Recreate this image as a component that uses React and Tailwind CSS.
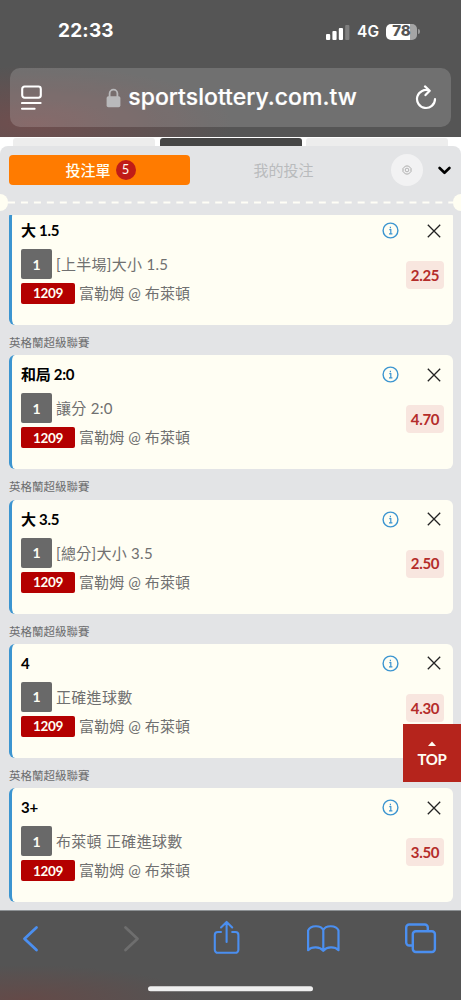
const bets = [
	{ id: 1, title: "大 1.5", market: "[上半場]大小 1.5", odds: "2.25" },
	{ id: 2, title: "和局 2:0", market: "讓分 2:0", odds: "4.70" },
	{ id: 3, title: "大 3.5", market: "[總分]大小 3.5", odds: "2.50" },
	{ id: 4, title: "4", market: "正確進球數", odds: "4.30" },
	{ id: 5, title: "3+", market: "布萊頓 正確進球數", odds: "3.50" },
];

function StatusBar() {
	return (
		<div className="flex h-[62px] items-center justify-between pt-px pl-[58px] pr-[41px]">
			<span className="text-[19px] font-bold tracking-[0.2px]">
				22:33
			</span>
			<div className="flex items-center">
				<svg width="24" height="16" viewBox="0 0 24 16" fill="#fff">
					<rect x="0" y="10" width="4.2" height="6" rx="1" />
					<rect x="6.4" y="7" width="4.2" height="9" rx="1" />
					<rect x="12.8" y="4" width="4.2" height="12" rx="1" />
					<rect
						x="19.2"
						y="1"
						width="4.2"
						height="15"
						rx="1"
						opacity=".25"
					/>
				</svg>
				<span className="ml-[7px] text-[15.5px] font-semibold">4G</span>
				<div className="ml-[7px] flex h-4 w-[31px] items-center justify-center rounded-[5px] bg-linear-to-r from-white from-78% to-[#a5a5a5] to-78% text-[15px] font-extrabold text-[#555]">
					78
				</div>
				<div className="ml-px h-[5px] w-[2px] rounded-r-full bg-[#999]" />
			</div>
		</div>
	);
}

function AddressBar() {
	return (
		<div className="mx-[10px] mt-[6px] flex h-[59px] items-center rounded-[10px] bg-white/16 pl-[11px] pr-[14px]">
			<svg
				width="22"
				height="26"
				viewBox="0 0 22 26"
				fill="none"
				stroke="#fff"
				strokeWidth="2.1"
				strokeLinecap="round"
			>
				<rect x="1.2" y="1.5" width="18.6" height="11.2" rx="2.4" />
				<path d="M1 18h18.600M1 23.700h12.600" />
			</svg>
			<div className="flex flex-1 items-center justify-center pl-[5px]">
				<svg
					className="mr-[7px]"
					width="15"
					height="20"
					viewBox="0 0 15 20"
				>
					<path
						d="M3.600 9V5.600a3.900 3.900 0 0 1 7.800 0V9"
						fill="none"
						stroke="#b9b9bb"
						strokeWidth="1.8"
					/>
					<rect
						x=".6"
						y="8.3"
						width="13.8"
						height="11"
						rx="1.8"
						fill="#b9b9bb"
					/>
				</svg>
				<span className="text-[23px] font-medium tracking-[0.02px] [-webkit-text-stroke:0.2px_white]">
					sportslottery.com.tw
				</span>
			</div>
			<svg
				width="22"
				height="26"
				viewBox="0 0 22 26"
				fill="none"
				stroke="#fff"
				strokeWidth="2.2"
				strokeLinecap="round"
				strokeLinejoin="round"
			>
				<path d="M14.500 5.700A9 9 0 1 0 20 14.200M10 1.400l4.700 4.300-4.200 4.400" />
			</svg>
		</div>
	);
}

function SlipTabs() {
	return (
		<div className="flex h-[47px] items-center pt-px pl-[9px] pr-[9px]">
			<button className="flex h-[30px] w-[181px] items-center justify-center rounded-[4px] bg-[#ff7b00] pl-[2px] text-[15px] font-medium text-[#fffef2]">
				投注單
				<span className="ml-[5px] flex h-5 w-5 items-center justify-center rounded-full bg-[#c01c17] text-[13px] font-normal">
					5
				</span>
			</button>
			<button className="w-[187px] text-center text-[15px] font-normal text-[#b9bbbd]">
				我的投注
			</button>
			<button className="ml-[14px] flex h-8 w-8 items-center justify-center rounded-full bg-[#f2f2f3]">
				<svg
					width="10"
					height="10"
					viewBox="0 0 10 10"
					fill="none"
					stroke="#a3a3a3"
					strokeWidth=".9"
				>
					<path d="M3.500 1h3L9 3.500v3L6.500 9h-3L1 6.500v-3z" />
					<rect x="3.400" y="3.400" width="3.200" height="3.200" rx="1" />
				</svg>
			</button>
			<svg
				className="ml-[15px]"
				width="13"
				height="9"
				viewBox="0 0 13 9"
				fill="none"
				stroke="#000"
				strokeWidth="2.6"
				strokeLinecap="round"
				strokeLinejoin="round"
			>
				<path d="M1.600 2l4.900 4.800L11.400 2" />
			</svg>
		</div>
	);
}

// Ticket-like perforation between the tabs and the list
function Perforation() {
	return (
		<div className="flex h-[21.5px] items-start justify-between">
			<div className="mt-px h-[17px] w-2 rounded-r-full bg-[#fffef2]" />
			<svg
				className="mt-[8px]"
				width="445"
				height="3"
				viewBox="0 0 445 3"
			>
				<path
					d="M0 1.500h445"
					stroke="#fffef6"
					strokeWidth="2.2"
					strokeDasharray="7 5.950"
				/>
			</svg>
			<div className="mt-px h-[17px] w-2 rounded-l-full bg-[#fffef2]" />
		</div>
	);
}

function BetCard({ bet }) {
	return (
		<div className="flex h-[114px] rounded-[6px] border-l-[3px] border-[#3c95d0] bg-[#fffef3] pl-[9px] pr-[9px]">
			<div className="flex-1 pt-[8px]">
				<h3 className="h-[22px] text-[15px] leading-[22px] font-bold tracking-[-0.3px] text-black">
					{bet.title}
				</h3>
				<div className="mt-[8px] flex items-center">
					<span className="flex h-[30px] w-[31px] items-center justify-center rounded-[2px] bg-[#696969] text-[14px] font-bold text-[#fffef3]">
						1
					</span>
					<span className="ml-[4px] text-[15px] leading-[22px] font-normal tracking-[0.3px] text-[#707070]">
						{bet.market}
					</span>
				</div>
				<div className="mt-[4px] flex items-center">
					<span className="flex h-[21px] w-[54px] items-center justify-center rounded-[2px] bg-[#b40000] text-[13.5px] font-bold tracking-[-0.3px] text-[#fffef3]">
						1209
					</span>
					<span className="ml-[4px] text-[15px] leading-[21px] font-normal tracking-[0.1px] text-[#707070]">
						富勒姆 @ 布萊頓
					</span>
				</div>
			</div>
			<div className="flex w-[62px] flex-col items-end pt-[11px]">
				<div className="flex h-[17px] w-full items-center justify-between pr-[3px]">
					<svg
						width="17"
						height="17"
						viewBox="0 0 17 17"
						fill="none"
						stroke="#3c95d0"
						strokeWidth="1.4"
					>
						<circle cx="8.500" cy="8.500" r="7.400" />
						<path
							d="M7.300 7.600h1.500v4.200M7 11.800h3.400M8.400 4.700v1.500"
							strokeWidth="1.2"
						/>
					</svg>
					<svg
						width="14"
						height="14"
						viewBox="0 0 14 14"
						fill="none"
						stroke="#222"
						strokeWidth="1.3"
					>
						<path d="M.8.8l12.400 12.400M13.200.8L.8 13.200" />
					</svg>
				</div>
				<span className="mt-[22px] flex h-[28px] w-[38px] items-center justify-center rounded-[4px] bg-[#f8e6df] text-[15px] font-bold tracking-[-0.3px] text-[#b42c2a]">
					{bet.odds}
				</span>
			</div>
		</div>
	);
}

function Toolbar() {
	return (
		<div className="h-[90px] border-t border-[#8d9194] bg-[#545454] bg-[radial-gradient(ellipse_at_5%_100%,#644a48_0%,#545454_28%)]">
			<svg
				width="461"
				height="89"
				viewBox="0 911 461 89"
				fill="none"
				stroke="#4b8ff0"
				strokeWidth="2.4"
				strokeLinecap="round"
				strokeLinejoin="round"
			>
				<path d="M36.500 927.500l-12 11.300 12 11.300" strokeWidth="2.8" />
				<path
					d="M125.500 927.500l12 11.300-12 11.300"
					stroke="#6e6e6e"
					strokeWidth="2.8"
				/>
				<path
					d="M221 932h-3.200a3 3 0 0 0-3 3v14.800a3 3 0 0 0 3 3h17.600a3 3 0 0 0 3-3V935a3 3 0 0 0-3-3h-3.200M226.600 942v-19.500M221 927.500l5.600-5.600 5.600 5.600"
					strokeWidth="2.1"
				/>
				<path
					d="M323.300 950.800c-3.500-4.300-11.500-4.500-15.200-.6v-19.700c2.500-5.600 12.700-5.600 15.200-.500zM323.300 950.800c3.500-4.300 11.500-4.500 15.200-.6v-19.700c-2.500-5.600-12.700-5.600-15.200-.500"
					strokeWidth="2.2"
				/>
				<path d="M411.500 945.500h-2.300a3 3 0 0 1-3-3V927.500a3 3 0 0 1 3-3h15.600a3 3 0 0 1 3 3v3" />
				<rect
					x="412.800"
					y="931.300"
					width="22.100"
					height="20.700"
					rx="3"
				/>
				<path
					d="M150.500 988.800h160"
					stroke="#efefef"
					strokeWidth="5"
				/>
			</svg>
		</div>
	);
}

export default function App() {
	return (
		<div className="relative flex h-[1000px] w-[461px] flex-col overflow-hidden bg-white font-['Lato','Noto_Sans_CJK_TC',sans-serif]">
			<header className="h-[137px] bg-[#555] bg-[radial-gradient(ellipse_at_7%_90%,#704e4e_0%,#555_33%)] pb-[10px] font-['Inter',sans-serif] text-white">
				<StatusBar />
				<AddressBar />
			</header>

			{/* Page behind the slip */}
			<div className="flex h-[9px] justify-between bg-white px-[13px] pt-px">
				<div className="w-[142px] rounded-t-[3px] bg-[#ededed]" />
				<div className="w-[142px] rounded-t-[3px] bg-[#464646]" />
				<div className="w-[142px] rounded-t-[3px] bg-[#ededed]" />
			</div>

			<main className="flex min-h-0 flex-1 flex-col rounded-t-[8px] bg-[#e3e4e6]">
				<SlipTabs />
				<Perforation />
				{/* List is scrolled, so the first card loses its top edge */}
				<div className="flex-1 overflow-hidden pl-[9px] pr-[8px]">
					<div className="-mt-[3.5px]">
						{bets.map((bet, i) => (
							<section key={bet.id}>
								{i > 0 && (
									<p className="h-[30.3px] pt-px text-[11.5px] leading-[33px] text-[#6c6d6e]">
										英格蘭超級聯賽
									</p>
								)}
								<BetCard bet={bet} />
							</section>
						))}
					</div>
				</div>
			</main>

			<Toolbar />

			<button className="absolute right-0 top-[724px] flex h-[58px] w-[58px] flex-col items-center bg-[#b5241c] pt-[17px] text-[15px] leading-[18px] font-bold tracking-[-0.3px] text-[#fffef3]">
				<svg width="8" height="5" viewBox="0 0 8 5" fill="#fffef3">
					<path d="M0 5l4-4.500L8 5z" />
				</svg>
				<span className="mt-[4px]">TOP</span>
			</button>
		</div>
	);
}
